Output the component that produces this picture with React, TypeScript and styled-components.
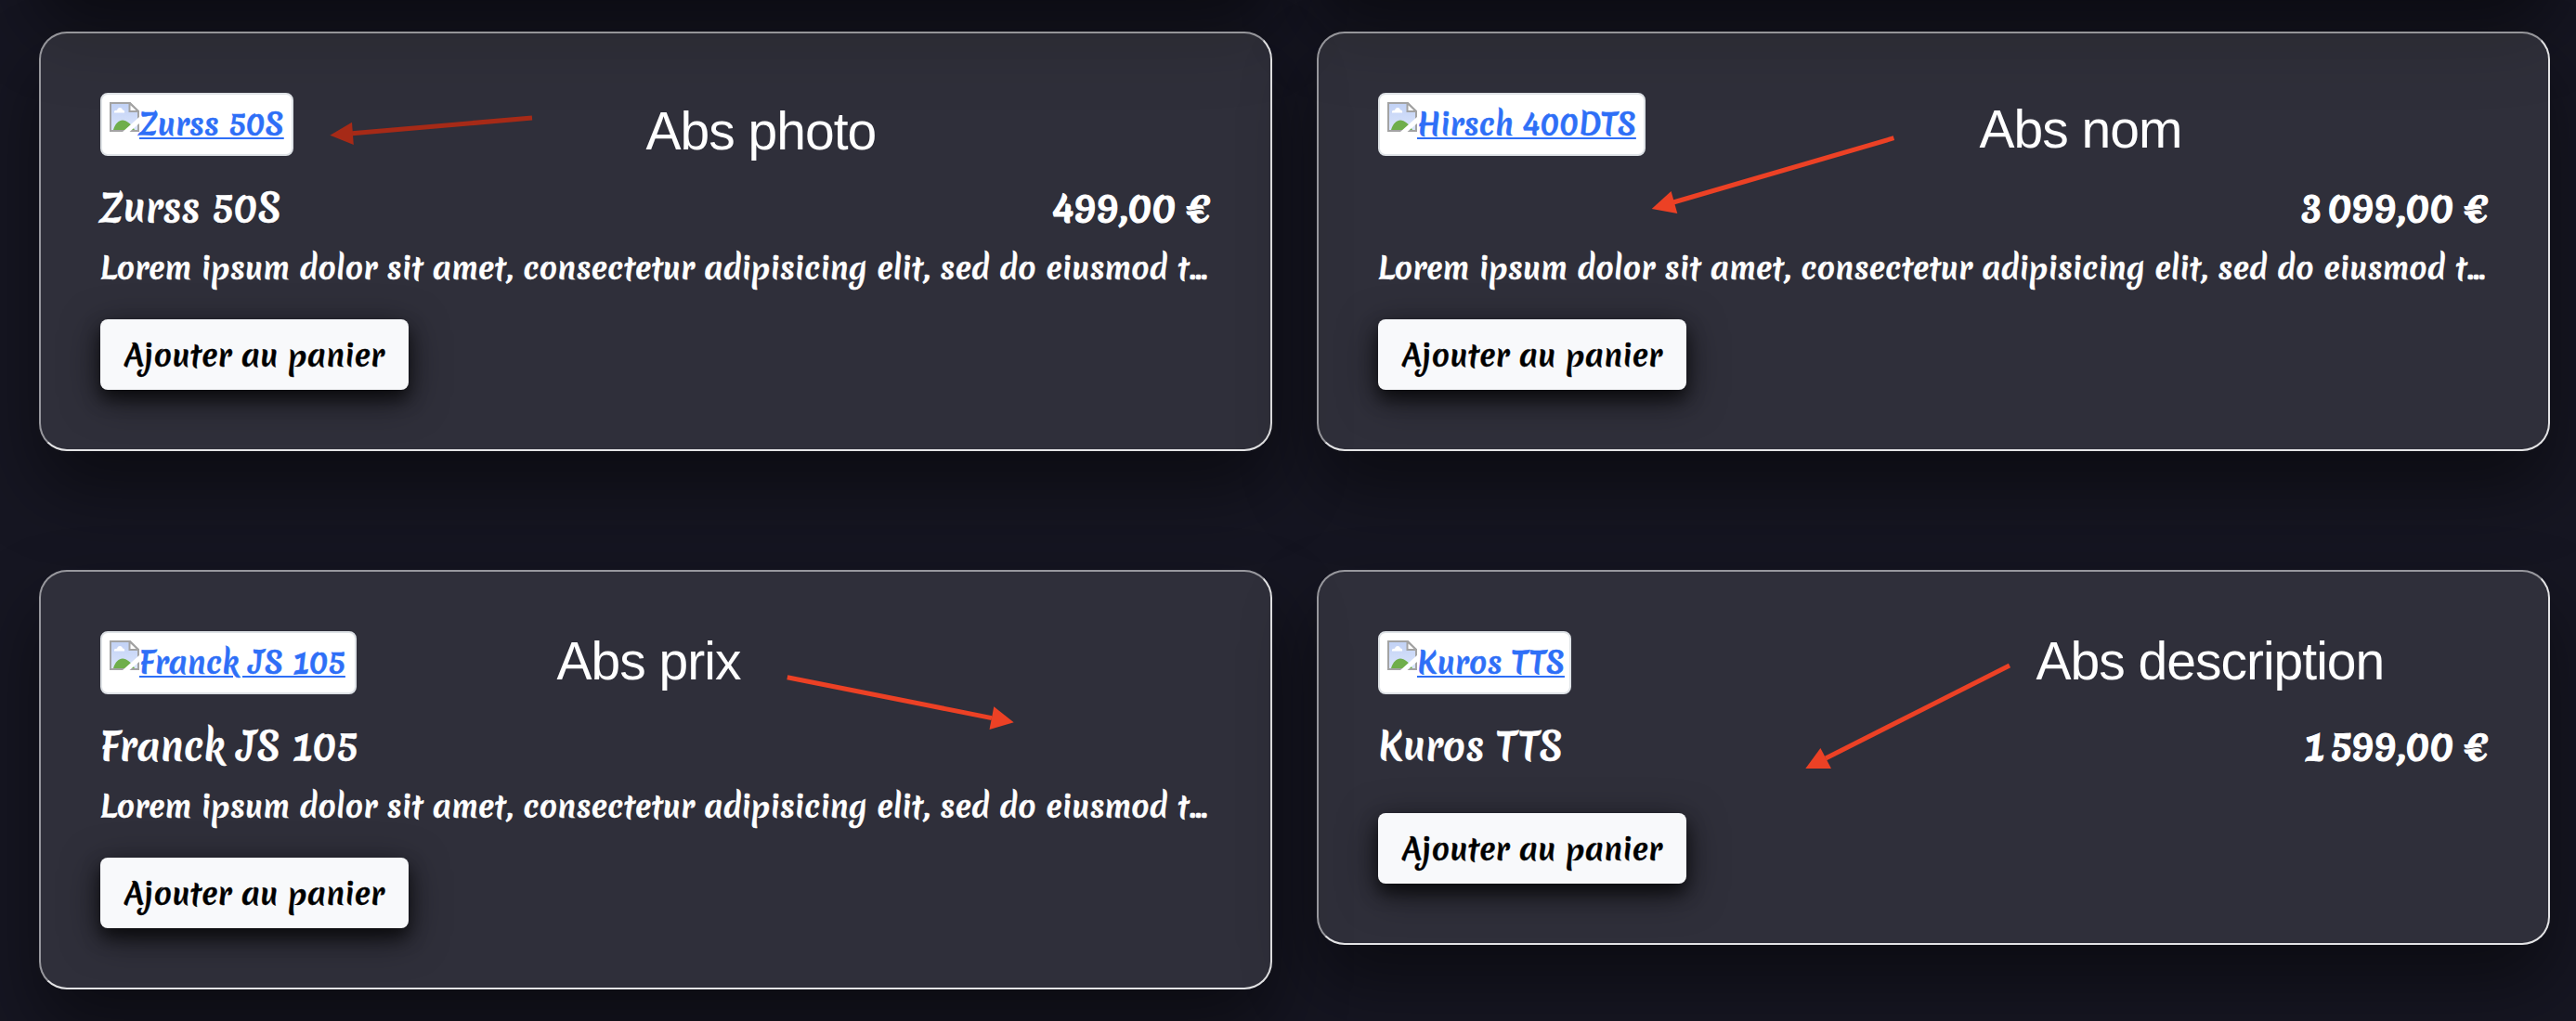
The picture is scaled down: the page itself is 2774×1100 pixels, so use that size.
import React from 'react';
import styled, { createGlobalStyle } from 'styled-components';

const GlobalStyle = createGlobalStyle`
  *, *::before, *::after { box-sizing: border-box; }
  html, body { margin: 0; padding: 0; background: #161622; }
`;

const script = `'Merienda', 'Noto Sans', 'Open Sans', sans-serif`;

const Page = styled.main`
  position: relative;
  display: flex;
  flex-direction: column;
  justify-content: flex-end;
  width: 2774px;
  height: 1100px;
  padding: 0 28px 34px 42px;
  overflow: hidden;
  background: #161622;
  color: #fff;
  font-family: ${script};
  font-weight: 700;
`;

const Row = styled.section<{ $gap?: number }>`
  display: grid;
  flex: none;
  grid-template-columns: 1328px 1328px;
  column-gap: 48px;
  align-items: start;
  margin-bottom: ${p => p.$gap ?? 0}px;
`;

const CardBox = styled.article`
  display: flex;
  flex-direction: column;
  align-items: flex-start;
  min-height: 300px;
  padding: 64px;
  border: 2px solid rgba(255, 255, 255, 0.5);
  border-right-color: rgba(255, 255, 255, 0.87);
  border-bottom-color: rgba(255, 255, 255, 0.87);
  border-radius: 30px;
  background: rgba(255, 255, 255, 0.11);
  box-shadow: 0 40px 80px rgba(0, 0, 0, 0.48);
  -webkit-text-stroke: 0.5px currentColor;
`;

const Thumb = styled.a`
  display: flex;
  align-items: flex-start;
  height: 68px;
  padding: 8px;
  border: 2px solid #dee2e6;
  border-radius: 8px;
  background: #fff;
  color: #2e6ff7;
  text-decoration: none;
`;

const Alt = styled.span<{ $w: number }>`
  width: ${p => p.$w}px;
  font-size: 32px;
  line-height: 48px;
  white-space: nowrap;
  text-decoration: underline;
  text-decoration-thickness: 2px;
  text-underline-offset: 2px;
`;

const Heading = styled.header`
  display: flex;
  justify-content: space-between;
  width: 100%;
  height: 52px;
  margin: 30px 0 15px;
  font-size: 40px;
  line-height: 52px;
  white-space: nowrap;
`;

const Name = styled.h2`
  margin: 0;
  font-size: inherit;
  font-weight: 700;
`;

const Price = styled.strong`
  font-weight: 700;
  -webkit-text-stroke-width: 1.1px;
`;

const Description = styled.p`
  margin: 0;
  font-size: 32px;
  line-height: 48px;
  white-space: nowrap;
`;

const AddButton = styled.button`
  width: 332px;
  height: 76px;
  margin: 31px 0 0;
  padding: 2px 0 0;
  border: 0;
  border-radius: 8px;
  background: #f8f9fb;
  color: #000;
  font: 700 32px/74px ${script};
  -webkit-text-stroke: 0.4px #000;
  box-shadow: 0 10px 18px rgba(0, 0, 0, 0.6), 0 10px 40px rgba(0, 0, 0, 0.5);
`;

const Note = styled.span<{ $x: number; $y: number }>`
  position: absolute;
  left: ${p => p.$x}px;
  top: ${p => p.$y}px;
  font: normal 400 57px/57px 'Liberation Sans', Helvetica, Arial, sans-serif;
  letter-spacing: -1px;
  white-space: nowrap;
`;

const Arrows = styled.svg`
  position: absolute;
  inset: 0;
  width: 2774px;
  height: 1100px;
  pointer-events: none;
`;

const Icon = styled.svg`
  flex: none;
  width: 32px;
  height: 32px;
`;

function BrokenImage() {
  return (
    <Icon viewBox="0 0 32 32">
      <defs>
        <linearGradient id="sky" x1="0" y1="0" x2="0" y2="1">
          <stop offset="0" stopColor="#c1d1f5" />
          <stop offset="1" stopColor="#dbe5fb" />
        </linearGradient>
      </defs>
      <path d="M1 1H22L31 10V31H1Z" fill="url(#sky)" />
      <path d="M5 11.5C4.500 9 7 8.500 8 9C8.500 5.500 13 5 14 8.500C16 8.500 16.500 10 16 11.500Z" fill="#fff" />
      <path d="M4 30C6 23 10 19.500 14 19.500C18 19.500 24 24 27 30Z" fill="#6fae4b" />
      <path d="M1 32V1H22L31 10V32" fill="none" stroke="#a3a3a3" strokeWidth="2" />
      <path d="M1 31H31" stroke="#a3a3a3" strokeWidth="2" />
      <path d="M21.500 1V10H31Z" fill="#fff" stroke="#a3a3a3" strokeWidth="2" />
      <path d="M14 32L32 16V23L21.500 32Z" fill="#fff" />
    </Icon>
  );
}

type Product = {
  name: string;
  altWidth: number;
  title?: string;
  price?: string;
  text?: string;
};

const lorem = 'Lorem ipsum dolor sit amet, consectetur adipisicing elit, sed do eiusmod t...';

const products: Product[][] = [
  [
    { name: 'Zurss 50S', altWidth: 156, title: 'Zurss 50S', price: '499,00 €', text: lorem },
    { name: 'Hirsch 400DTS', altWidth: 236, price: '3\u202f099,00 €', text: lorem },
  ],
  [
    { name: 'Franck JS 105', altWidth: 224, title: 'Franck JS 105', text: lorem },
    { name: 'Kuros TTS', altWidth: 156, title: 'Kuros TTS', price: '1\u202f599,00 €' },
  ],
];

function Card({ item }: { item: Product }) {
  return (
    <CardBox>
      <Thumb>
        <BrokenImage />
        <Alt $w={item.altWidth}>{item.name}</Alt>
      </Thumb>
      <Heading>
        <Name>{item.title}</Name>
        {item.price && <Price>{item.price}</Price>}
      </Heading>
      {item.text && <Description>{item.text}</Description>}
      <AddButton>Ajouter au panier</AddButton>
    </CardBox>
  );
}

export default function App() {
  return (
    <>
      <GlobalStyle />
      <Page>
        {/* tail of the preceding row: only its shadow reaches the viewport */}
        <Row $gap={44}><CardBox /><CardBox /></Row>
        <Row $gap={128}>{products[0].map(p => <Card key={p.name} item={p} />)}</Row>
        <Row>{products[1].map(p => <Card key={p.name} item={p} />)}</Row>

        <Note $x={695.5} $y={113}>Abs photo</Note>
        <Note $x={2131.5} $y={111}>Abs nom</Note>
        <Note $x={599.5} $y={684}>Abs prix</Note>
        <Note $x={2192.5} $y={684}>Abs description</Note>
        <Arrows viewBox="0 0 2774 1100">
          <g fill="#a62a17" stroke="#a62a17">
            <path d="M573 127L379 143.800" strokeWidth="5" />
            <path d="M355.400 145.800L379 131.700L380.800 156Z" stroke="none" />
          </g>
          <g fill="#ec4125" stroke="#ec4125">
            <path d="M2039.400 148.700L1802 218" strokeWidth="5" />
            <path d="M1778.700 225L1799.600 206L1806.300 230Z" stroke="none" />
            <path d="M847.800 729.700L1068 773.600" strokeWidth="5" />
            <path d="M1091.700 778.300L1070.300 761.300L1065.500 786Z" stroke="none" />
            <path d="M2164 717L1966 817" strokeWidth="5" />
            <path d="M1944.300 828L1960.400 806L1972 828Z" stroke="none" />
          </g>
        </Arrows>
      </Page>
    </>
  );
}
